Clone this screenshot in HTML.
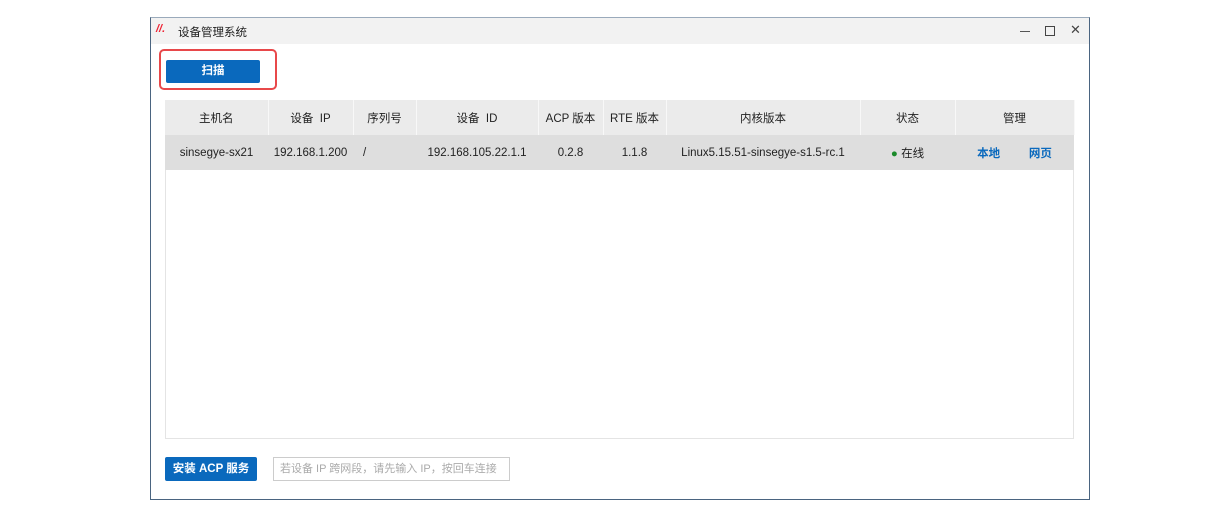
<!DOCTYPE html><html><head><meta charset="utf-8"><style>
body{margin:0;width:1222px;height:521px;background:#fff;position:relative;font-family:"Liberation Sans","Noto Sans CJK SC",sans-serif;font-size:11.5px;color:#222;overflow:hidden}
.win{position:absolute;left:150px;top:17px;width:938px;height:481px;border:1px solid #4a6480;border-top-color:#9aaabb;background:#fff}
.tb{position:absolute;left:0;top:0;right:0;height:26px;background:#f2f2f2}
.abs{position:absolute}
.btn{position:absolute;background:#0a69bd;color:#fff;border-radius:2px;text-align:center;font-weight:bold}
table{position:absolute;left:14px;top:82px;width:909px;border-collapse:collapse;table-layout:fixed}
td{height:35px;text-align:center;padding:0;white-space:nowrap;box-sizing:border-box}
th{height:35px;background:#ebebeb;font-weight:normal;border-right:1px solid #f8f8f8;padding:0;box-sizing:border-box}
tr.r td{background:#dedede}
.box{position:absolute;left:14px;top:82px;width:907px;height:337px;border:1px solid #e4e4e4}
</style></head><body>
<div class="win">
<div class="tb">
<div class="abs" style="left:5px;top:5px;color:#e23;font-weight:bold;font-style:italic;font-size:11px">//.</div>
<div class="abs" style="left:27px;top:6px;font-size:11.5px">设备管理系统</div>
<div class="abs" style="left:869px;top:13px;width:10px;height:1px;background:#555"></div>
<div class="abs" style="left:894px;top:8px;width:8px;height:8px;border:1px solid #444"></div>
<div class="abs" style="left:919px;top:4px;font-size:13px;color:#444">✕</div>
</div>
<div class="abs" style="left:8px;top:31px;width:114px;height:37px;border:2px solid #e8484a;border-radius:5px"></div>
<div class="btn" style="left:15px;top:42px;width:94px;height:23px;line-height:23px">扫描</div>
<div class="box"></div>
<table>
<colgroup><col style="width:103px"><col style="width:85px"><col style="width:63px"><col style="width:122px"><col style="width:65px"><col style="width:63px"><col style="width:194px"><col style="width:95px"><col style="width:119px"></colgroup>
<tr><th>主机名</th><th>设备 &nbsp;IP</th><th>序列号</th><th>设备 &nbsp;ID</th><th>ACP 版本</th><th>RTE 版本</th><th>内核版本</th><th>状态</th><th>管理</th></tr>
<tr class="r"><td>sinsegye-sx21</td><td>192.168.1.200</td><td style="text-align:left;padding-left:10px">/</td><td>192.168.105.22.1.1</td><td>0.2.8</td><td>1.1.8</td><td>Linux5.15.51-sinsegye-s1.5-rc.1</td><td><span style="color:#1a8a2a">●</span> 在线</td><td style="color:#0a69bd;font-weight:bold">本地 &nbsp; &nbsp; &nbsp; &nbsp; 网页</td></tr>
</table>
<div class="btn" style="left:14px;top:439px;width:92px;height:24px;line-height:24px">安装 ACP 服务</div>
<div class="abs" style="left:122px;top:439px;height:22px;border:1px solid #ccc;line-height:22px;padding-left:6px;color:#aaa;font-size:11px;width:229px">若设备 IP 跨网段，请先输入 IP，按回车连接</div>
</div>
</body></html>
